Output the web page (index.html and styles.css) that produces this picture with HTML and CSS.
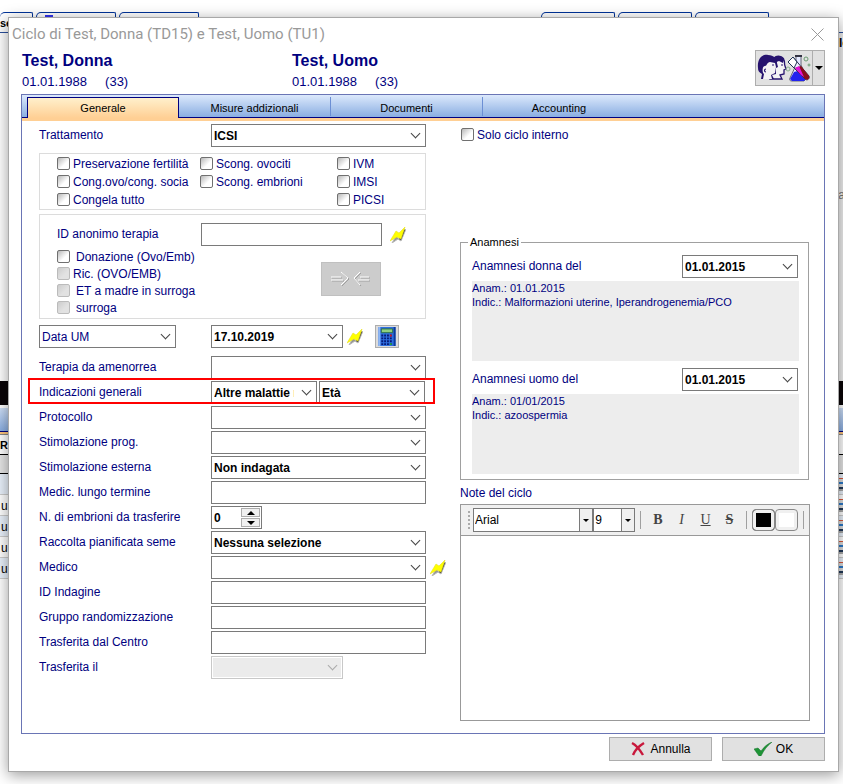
FILE: index.html
```html
<!doctype html>
<html lang="it">
  <head>
    <meta charset="utf-8">
    <title>Ciclo di Test, Donna (TD15) e Test, Uomo (TU1)</title>
    <link rel="stylesheet" href="styles.css">
  </head>
  <body>

    <!-- shared icons -->
    <svg class="defs" width="0" height="0">
      <defs>
        <symbol id="bolt" viewBox="0 0 16 16">
          <path d="M2 16 6 9l3 3 7-10-5 12-3-2z" fill="#666" stroke="#999" stroke-width="1" opacity=".7"/>
          <path d="M9 12l5-10 1 1-4 10z" fill="#333"/>
          <path d="M0 14 6 4l3 2 6-6-4 12-4-2z" fill="#ffff00" stroke="#e8e020" stroke-width=".6"/>
        </symbol>
      </defs>
    </svg>

    <!-- main window, behind the dialog -->
    <div class="backdrop" aria-hidden="true">
      <div class="back-tabs">
        <span class="back-tab first">se</span>
        <span class="back-tab"><i></i></span>
        <span class="back-tab"></span>
        <span class="back-space"></span>
        <span class="back-tab"></span>
        <span class="back-tab"></span>
        <span class="back-tab last"></span>
      </div>
      <div class="back-top"><b>le</b><span>a</span></div>
      <div class="back-black"></div>
      <div class="back-blue"></div>
      <div class="back-head">Ra</div>
      <div class="back-sub"></div>
      <div class="back-row"><span></span><i></i></div>
      <div class="back-row"><span>u</span><i></i></div>
      <div class="back-row"><span>u</span><i></i></div>
      <div class="back-row"><span>u</span><i></i></div>
      <div class="back-row"><span>u</span><i></i></div>
    </div>

    <form class="dialog">
      <div class="titlebar">
        <h1>Ciclo di Test, Donna (TD15) e Test, Uomo (TU1)</h1>
        <button type="button" class="close" aria-label="Chiudi">
          <svg width="13" height="13" viewBox="0 0 13 13"><path d="M.5.5l12 12M12.5.5l-12 12" stroke="#999" fill="none"/></svg>
        </button>
      </div>

      <div class="patients">
        <div class="patient">
          <h2>Test, Donna</h2>
          <p><span>01.01.1988</span><span>(33)</span></p>
        </div>
        <div class="patient">
          <h2>Test, Uomo</h2>
          <p><span>01.01.1988</span><span>(33)</span></p>
        </div>
        <div class="split">
          <button type="button" aria-label="Laboratorio">
            <svg width="54" height="30" viewBox="0 0 54 30">
              <!-- heads -->
              <path d="M17 5c3-3 9-2 10 2 1 2 0 3 1 6l1 3-2 1v4l-4 1 2 4H13z" fill="#f4f2f4" stroke="#26126e" stroke-width="1.3"/>
              <path d="M17 5c3-3 9-2 10 2l-1 3-4-2-5 2z" fill="#26126e"/>
              <path d="M1 15C0 6 5 1 11 2c6 0 9 4 9 8l1 4-2 1v6l-4 1 2 4H4l1-5c-3-2-4-3-4-6z" fill="#26126e"/>
              <path d="M8 13c2 0 2-4 5-4l5 1 1 4-1 6-4 2 1 4H6l1-5c-2-1-2-8 1-8z" fill="#f4f2f4"/>
              <path d="M15 12h2M24 12h2M9 16c-2 0-2 3 0 3" stroke="#26126e" stroke-width="1.2" fill="none"/>
              <!-- flask and tube -->
              <path d="M39 4v8l-6 13c-1 2 0 3 2 3h12l3-3-6-13V4" fill="#e4e9ff" stroke="#667"/>
              <path d="M37 19l-4 7 2 2h12l2-2-5-9z" fill="#2222ee"/>
              <path d="M38 3h7" stroke="#334" stroke-width="2"/>
              <path d="M31 9l5-5 16 19c1 3-2 5-4 3z" fill="#eef" stroke="#335"/>
              <path d="M38 15l6-2 8 10c1 3-2 5-4 3z" fill="#8a0d1c"/>
              <path d="M38 15l4-2 5 11-3-2z" fill="#e212d8"/>
              <path d="M31 9l5-5 4 5-3 6z" fill="#fff" stroke="#235"/>
              <circle cx="49" cy="6" r="2" fill="none" stroke="#6b9c72"/>
              <circle cx="52" cy="12" r="1" fill="none" stroke="#6b9c72"/>
              <circle cx="31" cy="16" r="2" fill="none" stroke="#8ab08e"/>
            </svg>
          </button>
          <button type="button" class="arrow" aria-label="Altro"><i class="tri"></i></button>
        </div>
      </div>

      <div class="panel">
        <div class="tabs" role="tablist">
          <button type="button" role="tab" class="tab active" aria-selected="true">Generale</button>
          <button type="button" role="tab" class="tab">Misure addizionali</button>
          <button type="button" role="tab" class="tab">Documenti</button>
          <button type="button" role="tab" class="tab">Accounting</button>
        </div>

        <div class="content">
          <div class="left">
            <div class="row">
              <label for="trattamento">Trattamento</label>
              <span class="combo"><select id="trattamento"><option>ICSI</option></select></span>
            </div>

            <div class="box options">
              <label class="check"><input type="checkbox">Preservazione fertilità</label>
              <label class="check"><input type="checkbox">Scong. ovociti</label>
              <label class="check"><input type="checkbox">IVM</label>
              <label class="check"><input type="checkbox">Cong.ovo/cong. socia</label>
              <label class="check"><input type="checkbox">Scong. embrioni</label>
              <label class="check"><input type="checkbox">IMSI</label>
              <label class="check"><input type="checkbox">Congela tutto</label>
              <span></span>
              <label class="check"><input type="checkbox">PICSI</label>
            </div>

            <div class="box donor">
              <div class="anon">
                <label for="anon">ID anonimo terapia</label>
                <input type="text" class="field" id="anon">
                <svg class="bolt"><use href="#bolt"/></svg>
              </div>
              <div class="donor-body">
                <div class="checks">
                  <label class="check wide"><input type="checkbox">Donazione (Ovo/Emb)</label>
                  <label class="check"><input type="checkbox" disabled>Ric. (OVO/EMB)</label>
                  <label class="check wide"><input type="checkbox" disabled>ET a madre in surroga</label>
                  <label class="check wide"><input type="checkbox" disabled>surroga</label>
                </div>
                <button type="button" class="link-btn" disabled aria-label="Collega">
                  <svg width="42" height="16" viewBox="0 0 42 16" fill="none">
                    <path d="M2 10h12M2 7h10M12 2l7 6-7 7M40 10H29M40 7H31M31 2l-6 6 6 7" stroke="#9f9f9f"/>
                    <path d="M1 9h12M1 6h10M11 1l7 6-7 7M39 9H28M39 6H30M30 1l-6 6 6 7" stroke="#fff"/>
                  </svg>
                </button>
              </div>
            </div>

            <div class="row date-row">
              <span class="combo plain short"><select aria-label="Tipo data"><option>Data UM</option></select></span>
              <div class="inline">
                <span class="combo date"><select aria-label="Data"><option>17.10.2019</option></select></span>
                <svg class="bolt"><use href="#bolt"/></svg>
                <button type="button" class="calc" aria-label="Calcola">
                  <svg width="18" height="19" viewBox="0 0 18 20">
                    <path d="M0 0h18v20H0z" fill="#2f6fe0"/>
                    <path d="M0 0h2v20H0z" fill="#8db7f5"/>
                    <path d="M16 0h2v20h-2z" fill="#0b3a9a"/>
                    <path d="M3 2h12v4H3z" fill="#8fd07f" stroke="#286b45"/>
                    <path d="M3 9h12M3 12h12M3 15h12M3 18h12" stroke="#061a78" stroke-width="2" stroke-dasharray="2 1"/>
                    <path d="M12 8h2v2h-2z" fill="#e01818"/>
                    <path d="M12 17h2v2h-2z" fill="#20a838"/>
                  </svg>
                </button>
              </div>
            </div>

            <div class="row">
              <label for="terapia">Terapia da amenorrea</label>
              <span class="combo"><select id="terapia"><option></option></select></span>
            </div>
            <div class="row highlight">
              <label for="indicazioni">Indicazioni generali</label>
              <div class="pair">
                <span class="combo"><select id="indicazioni"><option>Altre malattie metaboliche</option></select></span>
                <span class="combo"><select aria-label="Seconda indicazione"><option>Età</option></select></span>
              </div>
            </div>
            <div class="row">
              <label for="protocollo">Protocollo</label>
              <span class="combo"><select id="protocollo"><option></option></select></span>
            </div>
            <div class="row">
              <label for="stim-prog">Stimolazione prog.</label>
              <span class="combo"><select id="stim-prog"><option></option></select></span>
            </div>
            <div class="row">
              <label for="stim-est">Stimolazione esterna</label>
              <span class="combo"><select id="stim-est"><option>Non indagata</option></select></span>
            </div>
            <div class="row">
              <label for="medic">Medic. lungo termine</label>
              <input type="text" class="field" id="medic">
            </div>
            <div class="row">
              <label for="embrioni">N. di embrioni da trasferire</label>
              <div class="spin">
                <input type="text" id="embrioni" value="0">
                <span class="spin-btns">
                  <button type="button" aria-label="Aumenta"><i class="tri up"></i></button>
                  <button type="button" aria-label="Diminuisci"><i class="tri"></i></button>
                </span>
              </div>
            </div>
            <div class="row">
              <label for="raccolta">Raccolta pianificata seme</label>
              <span class="combo"><select id="raccolta"><option>Nessuna selezione</option></select></span>
            </div>
            <div class="row">
              <label for="medico">Medico</label>
              <span class="combo"><select id="medico"><option></option></select></span>
              <svg class="bolt"><use href="#bolt"/></svg>
            </div>
            <div class="row">
              <label for="indagine">ID Indagine</label>
              <input type="text" class="field" id="indagine">
            </div>
            <div class="row">
              <label for="gruppo">Gruppo randomizzazione</label>
              <input type="text" class="field" id="gruppo">
            </div>
            <div class="row">
              <label for="centro">Trasferita dal Centro</label>
              <input type="text" class="field" id="centro">
            </div>
            <div class="row">
              <label for="trasferita">Trasferita il</label>
              <span class="combo date off"><select id="trasferita" disabled><option></option></select></span>
            </div>
          </div>

          <div class="right">
            <label class="check solo"><input type="checkbox">Solo ciclo interno</label>

            <fieldset class="anamnesi">
              <legend>Anamnesi</legend>
              <div class="an-row">
                <label for="an-donna">Anamnesi donna del</label>
                <span class="combo"><select id="an-donna"><option>01.01.2015</option></select></span>
              </div>
              <div class="an-text">Anam.: 01.01.2015<br>Indic.: Malformazioni uterine, Iperandrogenemia/PCO</div>
              <div class="an-row">
                <label for="an-uomo">Anamnesi uomo del</label>
                <span class="combo"><select id="an-uomo"><option>01.01.2015</option></select></span>
              </div>
              <div class="an-text">Anam.: 01/01/2015<br>Indic.: azoospermia</div>
            </fieldset>

            <label class="note-label" for="note">Note del ciclo</label>
            <div class="editor">
              <div class="toolbar">
                <i class="grip"></i>
                <span class="tool-combo font"><select aria-label="Carattere"><option>Arial</option></select><i class="drop"><i class="tri"></i></i></span>
                <span class="tool-combo size"><select aria-label="Dimensione"><option>9</option></select><i class="drop"><i class="tri"></i></i></span>
                <i class="sep"></i>
                <button type="button" class="fmt"><b>B</b></button>
                <button type="button" class="fmt"><em>I</em></button>
                <button type="button" class="fmt"><u>U</u></button>
                <button type="button" class="fmt"><s>S</s></button>
                <i class="sep"></i>
                <button type="button" class="swatch black" aria-label="Colore testo"></button>
                <button type="button" class="swatch" aria-label="Colore sfondo"></button>
                <i class="sep"></i>
              </div>
              <textarea id="note"></textarea>
            </div>
          </div>
        </div>
      </div>

      <div class="footer">
        <button type="button" class="btn">
          <svg width="16" height="16" viewBox="0 0 16 16"><path d="M2 2c4 2 8 7 11 12M14 2C9 5 5 9 3 14" fill="none" stroke="#c8183c" stroke-width="2.400"/></svg>
          Annulla
        </button>
        <button type="button" class="btn">
          <svg width="18" height="14" viewBox="0 0 18 14"><path d="M0 7l4-1 3 3c3-4 6-7 11-9-5 4-8 8-11 14H5z" fill="#1f9436" stroke="#15702a" stroke-width=".5"/></svg>
          OK
        </button>
      </div>
    </form>

  </body>
</html>
```
FILE: styles.css
```css
*, *::after {
  box-sizing: border-box;
}
body {
  margin: 0;
  padding: 17px 4px 12px 8px;
  position: relative;
  min-height: 100vh;
  overflow: hidden;
  background: #fff;
  color: #000080;
  font: 12px/14px "Liberation Sans", Arial, sans-serif;
}
h1, h2, p {
  margin: 0;
}
button, input, select, textarea {
  margin: 0;
  padding: 0;
  font: inherit;
  color: #000;
  border-radius: 0;
}
svg {
  display: block;
  flex: none;
}
.defs {
  position: absolute;
}

/* window behind */
.backdrop {
  position: absolute;
  inset: 0;
  overflow: hidden;
  color: #000;
}
.back-tabs {
  display: flex;
  height: 33px;
  padding-top: 12px;
  border-bottom: 1px solid #2a4f9c;
}
.back-tab {
  width: 80px;
  margin-right: 3px;
  border: 1px solid #003399;
  border-bottom: 0;
  border-radius: 5px 2px 0 0;
}
.back-tab.first {
  width: 33px;
  border-left: 0;
  padding-top: 3px;
  font-size: 11px;
  font-weight: bold;
}
.back-tab i {
  display: block;
  width: 8px;
  height: 3px;
  margin: 2px 0 0 8px;
  background: #3333ee;
}
.back-tab.last {
  margin-right: 74px;
}
.back-space {
  flex: 1;
}
.back-space ~ .back-tab {
  width: 74px;
}
.back-top {
  height: 348px;
  margin-right: -6px;
  padding: 3px 0;
  text-align: right;
  background: linear-gradient(90deg, #fff 50%, #f0f0f0 50%);
}
.back-top b,
.back-top span {
  display: block;
}
.back-top span {
  margin: 138px 4px 0 0;
  color: #777;
}
.back-black {
  height: 24px;
  margin-bottom: 3px;
  background: #0a0508;
}
.back-blue {
  height: 26px;
  background: linear-gradient(#cfe0f8, #86abe0);
  border-bottom: 2px solid #ffc67c;
  box-shadow: inset 0 -1px #000080;
}
.back-head {
  height: 21px;
  padding-top: 3px;
  border-top: 1px solid #888;
  border-bottom: 1px solid #000;
  font-size: 11px;
  font-weight: bold;
}
.back-sub {
  height: 19px;
  background: #e6e6e6;
  border-bottom: 1px solid #000;
}
.back-row {
  display: flex;
  justify-content: space-between;
  height: 21px;
  padding: 4px 0 0 1px;
  border-bottom: 1px solid #ccc;
}
.back-row:nth-child(odd) {
  background: #e9f1fb;
}
.back-row i {
  width: 4px;
  height: 13px;
  background: linear-gradient(#d8583a 1px, #ddd 1px, #ddd 4px, #2a78c8 4px, #2a78c8 6px, #ddd 6px, #ddd 9px, #203858 9px, #203858 11px, #aaa 11px);
}

/* dialog */
.dialog {
  position: relative;
  padding: 0 13px 10px 12px;
  background: #fff;
  border: 1px solid #a8a8a8;
  box-shadow: 0 3px 14px rgba(0, 0, 0, .4);
}
.titlebar {
  display: flex;
  justify-content: space-between;
  align-items: center;
  height: 32px;
  margin-left: -9px;
}
.titlebar h1 {
  color: #999;
  font: 15px/20px Roboto, "Noto Sans", sans-serif;
}
.close {
  margin-right: 1px;
  background: none;
  border: 0;
}
.patients {
  display: flex;
  height: 44px;
  padding-left: 1px;
}
.patient {
  width: 270px;
}
.patient h2 {
  font-size: 16px;
  line-height: 22px;
}
.patient p {
  display: flex;
  gap: 18px;
  font-size: 13px;
  line-height: 20px;
}
.split {
  display: flex;
  height: 36px;
  margin-left: auto;
}
.split button {
  display: flex;
  align-items: center;
  justify-content: center;
  width: 58px;
  background: #e1e1e1;
  border: 1px solid #adadad;
}
.split .arrow {
  width: 13px;
  margin-left: -1px;
}
.tri {
  display: block;
  border: 4px solid transparent;
  border-top-color: #000;
  border-bottom: 0;
}
.tri.up {
  border-top: 0;
  border-bottom: 4px solid #000;
}

/* tabs */
.panel {
  border: 1px solid #6a75b5;
}
.tabs {
  display: flex;
  height: 26px;
  padding: 2px 0 0 5px;
  background: linear-gradient(#dce9fc, #86abe0);
  border-bottom: 3px solid #ffcf94;
  box-shadow: inset 0 -1px #000080;
}
.tab {
  width: 152px;
  background: none;
  border: 0;
  font-size: 11px;
}
.tab.active {
  background: linear-gradient(#fff0cc, #ffcf94);
  border: 1px solid #000080;
  border-bottom: 0;
}
.tab:not(.active):not(:last-child) {
  border-right: 1px solid #fff;
  border-image: linear-gradient(transparent 1px, #6c8fd4 1px, #6c8fd4 18px, transparent 18px) 1;
}

/* form */
.content {
  display: grid;
  grid-template-columns: 408px minmax(0, 1fr);
  gap: 13px;
  padding: 3px 14px 12px 17px;
}
.row {
  display: grid;
  grid-template-columns: 172px 215px 20px;
  align-items: center;
  height: 23px;
  margin-bottom: 2px;
}
.row label,
.anon label,
.an-row label {
  padding-bottom: 2px;
}
.row > .bolt {
  margin-left: 4px;
}
.bolt {
  width: 16px;
  height: 16px;
}
.combo {
  display: block;
  position: relative;
}
.combo select,
.field {
  display: block;
  width: 100%;
  height: 23px;
  padding: 0 22px 0 2px;
  appearance: none;
  background: #fff;
  border: 1px solid #7a7a7a;
  font-weight: bold;
}
.combo::after {
  content: "";
  position: absolute;
  top: 6px;
  right: 7px;
  width: 7px;
  height: 7px;
  border: solid #444;
  border-width: 0 1px 1px 0;
  transform: rotate(45deg);
  pointer-events: none;
}
.combo.plain select {
  color: #000080;
  font-weight: normal;
}
.combo.short {
  width: 137px;
}
.combo.date {
  width: 132px;
}
.combo.off select {
  background: #ebebeb;
  border-color: #c8c8c8;
  box-shadow: inset 0 0 0 1px #fff;
  opacity: 1;
}
.combo.off::after {
  border-color: #aaa;
}
.box {
  width: 387px;
  border: 1px solid #dcdcdc;
}
.options {
  display: grid;
  grid-template-columns: 143px 137px auto;
  grid-auto-rows: 18px;
  margin-top: 6px;
  padding: 1px 0 0 17px;
}
.check {
  display: flex;
  align-items: center;
  gap: 3px;
  height: 17px;
  white-space: nowrap;
}
.check.wide {
  gap: 6px;
}
.check input {
  flex: none;
  width: 13px;
  height: 13px;
  appearance: none;
  background: linear-gradient(135deg, #b8b8b8, #fff 60%);
  border: 1px solid #707070;
  border-radius: 2px;
}
.check input:disabled {
  background: linear-gradient(135deg, #ccc, #e2e2e2 60%);
  border-color: #bbb;
}
.donor {
  margin-top: 4px;
  padding: 8px 16px 2px 17px;
}
.anon {
  display: grid;
  grid-template-columns: 144px 181px auto;
  align-items: center;
}
.anon .bolt {
  margin-left: 8px;
}
.donor-body {
  display: flex;
  justify-content: space-between;
  padding: 2px 28px 0 0;
}
.link-btn {
  display: flex;
  align-items: center;
  justify-content: center;
  width: 60px;
  height: 34px;
  margin-top: 14px;
  background: #ccc;
  border: 1px solid #c0c0c0;
}
.date-row {
  margin: 6px 0 8px;
}
.inline {
  display: flex;
  align-items: center;
}
.inline .bolt {
  margin: 0 12px 0 4px;
}
.calc {
  padding: 1px 2px;
  background: #dcdcdc;
  border: 1px solid #adadad;
}
.pair {
  display: grid;
  grid-template-columns: 1fr 1fr;
  gap: 2px;
  padding-right: 1px;
}
.highlight {
  position: relative;
}
.highlight::after {
  content: "";
  position: absolute;
  inset: -3px 12px 0 -11px;
  border: 2px solid #ff0000;
  pointer-events: none;
}
.spin {
  display: flex;
  width: 51px;
  height: 23px;
  border: 1px solid #7a7a7a;
}
.spin input {
  width: 29px;
  padding-left: 2px;
  border: 0;
  font-weight: bold;
}
.spin-btns {
  display: grid;
  gap: 1px;
  padding: 1px 0;
}
.spin-btns button {
  display: flex;
  align-items: center;
  justify-content: center;
  width: 19px;
  background: #f0f0f0;
  border: 1px solid #adadad;
}

/* right side */
.check.solo {
  height: 21px;
  margin-left: 1px;
}
.anamnesi {
  margin: 90px 1px 0 0;
  padding: 6px 9px 5px 11px;
  border: 1px solid #a0a0a0;
}
.anamnesi legend {
  margin-left: -4px;
  padding: 0 2px;
  color: #000;
  font-size: 11px;
}
.an-row {
  display: flex;
  align-items: center;
  justify-content: space-between;
  padding-right: 1px;
}
.an-row .combo {
  width: 116px;
}
.an-text {
  height: 80px;
  margin: 3px 0 7px;
  background: #ededed;
  font-size: 11px;
}
.an-text:last-child {
  margin-bottom: 0;
}
.note-label {
  display: block;
  margin: 6px 0 4px;
}
.editor {
  border: 1px solid #999;
}
.toolbar {
  display: flex;
  align-items: center;
  height: 31px;
  padding-left: 7px;
  background: #f0f0f0;
  border-bottom: 1px solid #999;
}
.grip {
  width: 2px;
  height: 18px;
  margin-right: 3px;
  background: repeating-linear-gradient(#aaa 0 2px, transparent 2px 4px);
}
.tool-combo {
  display: flex;
  height: 24px;
  background: #fff;
  border: 1px solid #7a7a7a;
}
.tool-combo select {
  flex: 1;
  min-width: 0;
  padding-left: 1px;
  appearance: none;
  background: #fff;
  border: 0;
}
.font {
  width: 121px;
}
.size {
  width: 42px;
}
.drop {
  display: flex;
  align-items: center;
  justify-content: center;
  width: 13px;
  background: #f0f0f0;
  border-left: 1px solid #7a7a7a;
}
.drop .tri {
  border-width: 3px 3px 0;
}
.sep {
  width: 1px;
  height: 18px;
  margin: 0 5px;
  background: #a0a0a0;
}
.fmt {
  width: 24px;
  background: none;
  border: 0;
  color: #444;
  font: 14px/18px "Liberation Serif", "Times New Roman", serif;
}
.fmt s {
  font-weight: bold;
}
.swatch {
  width: 23px;
  height: 22px;
  background: #fff;
  border: 1px solid #888;
  border-radius: 4px;
  box-shadow: inset 0 0 0 3px #f0f0f0;
}
.swatch.black {
  background: #000;
}
textarea {
  display: block;
  width: 100%;
  height: 184px;
  border: 0;
  resize: none;
}

/* footer */
.footer {
  display: flex;
  justify-content: flex-end;
  gap: 10px;
  padding-top: 3px;
}
.btn {
  display: flex;
  align-items: center;
  justify-content: center;
  gap: 4px;
  width: 103px;
  height: 24px;
  background: #e1e1e1;
  border: 1px solid #adadad;
}
```
